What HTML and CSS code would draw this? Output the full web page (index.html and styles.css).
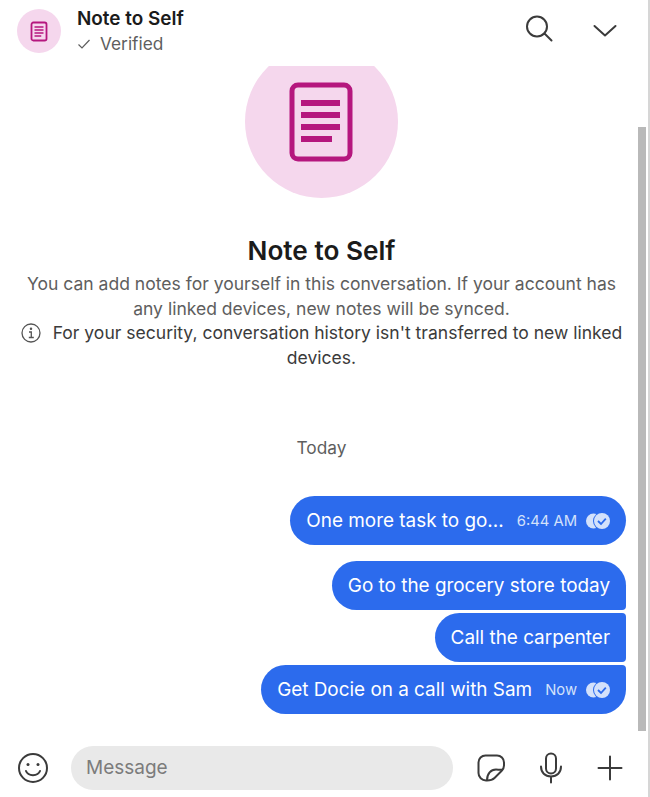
FILE: index.html
```html
<!DOCTYPE html>
<html lang="en">
<head>
<meta charset="UTF-8" />
<title>Note to Self</title>
<link rel="stylesheet" href="styles.css">
</head>
<body>
<div class="app">

  <!-- Header -->
  <header class="top">
    <div class="avatar">
      <svg viewBox="0 0 24 28" width="18" height="21" fill="none" stroke="#b5177e">
        <rect x="2" y="2" width="20" height="24" rx="2.5" stroke-width="2.4"/>
        <path d="M6 8h12M6 12h12M6 16h12M6 20h9" stroke-width="2"/>
      </svg>
    </div>
    <div class="top-text">
      <div class="top-name">Note to Self</div>
      <div class="top-sub">
        <svg viewBox="0 0 14 14" width="14" height="14" fill="none" stroke="#5e5e5e" stroke-width="1.2"><path d="M1.5 7.5l3.5 3.5 7.5-8"/></svg>
        Verified
      </div>
    </div>
    <div class="top-actions">
      <svg viewBox="0 0 28 28" width="28" height="28" fill="none" stroke="#3b3b3b" stroke-width="2" stroke-linecap="round"><circle cx="12" cy="11.5" r="10"/><path d="M19.5 18.5l7 7"/></svg>
      <svg class="chevron" viewBox="0 0 24 14" width="24" height="14" fill="none" stroke="#3b3b3b" stroke-width="2" stroke-linecap="round" stroke-linejoin="round"><path d="M1.5 2L12 11.500 22.500 2"/></svg>
    </div>
  </header>

  <!-- Conversacion -->
  <main class="chat">
    <div class="intro-circle">
      <svg viewBox="0 0 64 80" width="64" height="80" fill="none" stroke="#b5177e">
        <rect x="3" y="3" width="58" height="74" rx="6" stroke-width="5"/>
        <path d="M12 21h39M12 33h39M12 45h39M12 57h31" stroke-width="6"/>
      </svg>
    </div>
    <h1>Note to Self</h1>
    <p class="intro">You can add notes for yourself in this conversation. If your account has any linked devices, new notes will be synced.</p>
    <p class="security">
      <svg class="info" viewBox="0 0 20 20" width="20" height="20" fill="none" stroke="#555" stroke-width="1.3"><circle cx="10" cy="10" r="9"/><path d="M8 9h2.3v5.500M7.800 14.500h5"/><circle cx="10" cy="5.800" r="0.6" fill="#555"/></svg>
      For your security, conversation history isn't transferred to new linked devices.
    </p>
    <div class="day">Today</div>

    <div class="msgs">
      <div class="bubble first-one">
        <span>One more task to go...</span>
        <span class="time">6:44 AM</span>
        <svg class="ticks" viewBox="0 0 24 16" width="24" height="16"><circle cx="7.500" cy="8" r="7.500" fill="#d3e1fb"/><circle cx="16" cy="8" r="9" fill="#2c6bed"/><circle cx="16" cy="8" r="8" fill="#d3e1fb"/><path d="M12 8l3 3 4.800-5.400" fill="none" stroke="#2c6bed" stroke-width="1.800"/></svg>
      </div>
      <div class="bubble group-top">Go to the grocery store today</div>
      <div class="bubble group-mid">Call the carpenter</div>
      <div class="bubble group-end">
        <span>Get Docie on a call with Sam</span>
        <span class="time">Now</span>
        <svg class="ticks" viewBox="0 0 24 16" width="24" height="16"><circle cx="7.500" cy="8" r="7.500" fill="#d3e1fb"/><circle cx="16" cy="8" r="9" fill="#2c6bed"/><circle cx="16" cy="8" r="8" fill="#d3e1fb"/><path d="M12 8l3 3 4.800-5.400" fill="none" stroke="#2c6bed" stroke-width="1.800"/></svg>
      </div>
    </div>
    <div class="scroll-thumb"></div>
  </main>

  <!-- Barra de mensaje -->
  <footer class="composer">
    <svg viewBox="0 0 32 32" width="32" height="32" fill="none" stroke="#3b3b3b" stroke-width="2" stroke-linecap="round"><circle cx="16" cy="16" r="14"/><path d="M9 19c2 5.500 12 5.500 14 0"/><circle cx="11" cy="12.500" r="1.500" fill="#3b3b3b" stroke="none"/><circle cx="21" cy="12.500" r="1.500" fill="#3b3b3b" stroke="none"/></svg>
    <div class="input">Message</div>
    <div class="composer-actions">
      <svg viewBox="0 0 28 28" width="28" height="28" fill="none" stroke="#3b3b3b" stroke-width="2" stroke-linejoin="round"><path d="M10 26.500H9a7.500 7.500 0 0 1-7.500-7.500V8.500A7 7 0 0 1 8.500 1.500H20a7 7 0 0 1 7 7v3c0 2.500-1 4-2.500 5.500l-7 7c-2 2-4 2.500-7.500 2.500z"/><path d="M10 26.500c0-7 4-11 9-11 2 0 4 .5 7 .3"/></svg>
      <svg viewBox="0 0 24 32" width="24" height="32" fill="none" stroke="#3b3b3b" stroke-width="2" stroke-linecap="round"><rect x="7" y="1.500" width="10" height="20" rx="5"/><path d="M2 14.500c0 6 4 10 10 10s10-4 10-10M12 24.500v6"/></svg>
      <svg viewBox="0 0 26 26" width="26" height="26" fill="none" stroke="#3b3b3b" stroke-width="2" stroke-linecap="round"><path d="M13 1.500v23M1.500 13h23"/></svg>
    </div>
  </footer>

</div>
</body>
</html>
```

FILE: styles.css
```css
/* Reset */
* {
  margin: 0; padding: 0; box-sizing: border-box;
}
body, html {
  height: 100%;
  font-family: Inter, "Liberation Sans", sans-serif;
  background: #fff;
  overflow: hidden;
}

.app {
  width: 650px;
  height: 797px;
  display: flex;
  flex-direction: column;
  border-right: 2px solid #d6d6d6;
}

/* Header */
.top {
  height: 66px;
  flex-shrink: 0;
  display: flex;
  align-items: flex-start;
  padding: 8px 0 0 17px;
  background: #fff;
  position: relative;
  z-index: 2;
}
.avatar {
  width: 44px;
  height: 44px;
  margin-top: 1px;
  border-radius: 50%;
  background: #f5d7ed;
  display: flex;
  justify-content: center;
  align-items: center;
}
.top-text {
  margin-left: 16px;
}
.top-name {
  font-size: 18.900px;
  font-weight: 600;
  line-height: 22px;
  color: #1b1b1b;
}
.top-sub {
  display: flex;
  align-items: center;
  gap: 9px;
  font-size: 17.300px;
  line-height: 22px;
  margin-top: 3px;
  color: #5e5e5e;
}
.top-actions {
  margin-left: auto;
  display: flex;
  align-items: center;
  gap: 40px;
  padding: 7px 31px 0 0;
}
.chevron {
  margin-top: 4px;
}

/* Conversacion */
.chat {
  flex: 1;
  min-height: 0;
  position: relative;
  overflow: hidden;
  display: flex;
  flex-direction: column;
  align-items: center;
  padding-right: 5px;
}
.intro-circle {
  width: 153px;
  height: 153px;
  flex-shrink: 0;
  margin-top: -21px;
  margin-left: -1px;
  border-radius: 50%;
  background: #f5d7ed;
  display: flex;
  justify-content: center;
  align-items: center;
}
.chat h1 {
  margin-top: 37px;
  font-size: 26.200px;
  font-weight: 600;
  line-height: 32px;
  color: #1b1b1b;
}
.intro, .security {
  font-size: 17.550px;
  line-height: 24.500px;
  text-align: center;
}
.intro {
  margin-top: 5px;
  padding: 0 20px;
  color: #5e5e5e;
}
.security {
  padding: 0 14px;
  color: #3b3b3b;
}
.info {
  vertical-align: -4px;
  margin-right: 7px;
}
.day {
  margin-top: 66px;
  font-size: 17.300px;
  line-height: 24px;
  color: #5e5e5e;
}

/* Burbujas */
.msgs {
  align-self: stretch;
  margin-top: 36px;
  padding-right: 17px;
  display: flex;
  flex-direction: column;
  align-items: flex-end;
  gap: 3px;
}
.bubble {
  height: 49px;
  padding: 0 16px;
  border-radius: 25px;
  background: #2c6bed;
  color: #fff;
  font-size: 18.900px;
  display: flex;
  align-items: center;
}
.first-one {
  margin-bottom: 13px;
}
.group-top { border-bottom-right-radius: 4px; }
.group-mid { border-top-right-radius: 4px; border-bottom-right-radius: 4px; }
.group-end { border-top-right-radius: 4px; }
.time {
  margin-left: 13px;
  font-size: 14.800px;
  color: #d3e1fb;
}
.ticks {
  margin-left: 9px;
}
.scroll-thumb {
  position: absolute;
  top: 61px;
  right: 2px;
  width: 8px;
  height: 604px;
  background: #b9b9b9;
}

/* Barra de mensaje */
.composer {
  height: 64px;
  flex-shrink: 0;
  display: flex;
  align-items: center;
  padding: 6px 25px 0 17px;
  background: #fff;
}
.input {
  flex: 1;
  height: 44px;
  margin-left: 22px;
  padding: 0 0 2px 15px;
  border-radius: 22px;
  background: #e9e9e9;
  color: #7c7c7c;
  font-size: 19px;
  display: flex;
  align-items: center;
}
.composer-actions {
  display: flex;
  align-items: center;
  gap: 34px;
  margin-left: 24px;
}
```
